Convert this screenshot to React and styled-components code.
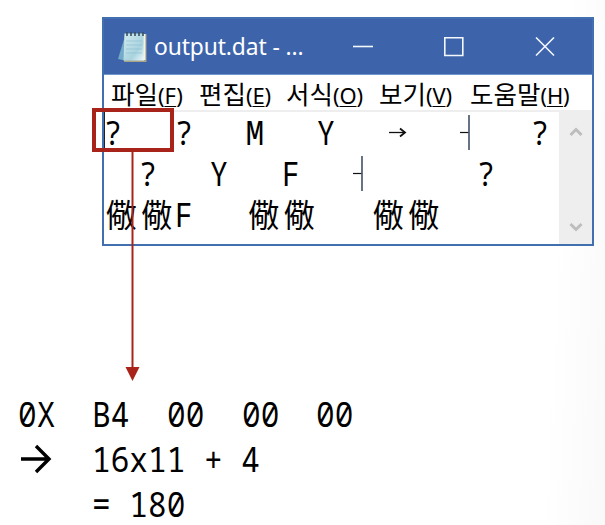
import React from 'react';
import styled, { createGlobalStyle } from 'styled-components';

const GlobalStyle = createGlobalStyle`
  * { box-sizing: border-box; }
  body { margin: 0; background: #fff; overflow: hidden; }
`;

const MONO = '"Noto Sans Mono", "DejaVu Sans Mono", monospace';
const SANS = '"Noto Sans", "Noto Sans CJK KR", sans-serif';

const Page = styled.main`
  position: relative;
  width: 605px;
  height: 525px;
  padding: 17px 0 0 102px;
  background: linear-gradient(93deg, #fff 90%, #f9f9f9 100%);
  color: #000;
`;

const NotepadWindow = styled.section`
  display: flex;
  flex-direction: column;
  width: 492px;
  height: 229px;
  border: 2px solid #416fb0;
  background: #fff;
`;

const TitleBar = styled.header`
  display: flex;
  align-items: center;
  height: 56px;
  flex: none;
  padding-left: 13px;
  background: #3d64aa;
  border-bottom: 1px solid #6f97cb;
`;

const NotepadGlyph = styled.svg`
  width: 32px;
  height: 34px;
  flex: none;
`;

const Title = styled.h1`
  width: 183px;
  margin: 0 0 0 5px;
  font: 400 22.8px/34px ${SANS};
  letter-spacing: -0.1px;
  white-space: pre;
  color: #fff;
`;

const WindowControls = styled.div`
  display: flex;
  gap: 71px;
  margin-left: 16px;
`;

const ControlIcon = styled.svg`
  width: 20px;
  height: 20px;
  fill: none;
  stroke: #f4f7fc;
  stroke-width: 1.6;
`;

const MenuBar = styled.nav`
  display: flex;
  height: 35px;
  flex: none;
  padding-left: 7px;
`;

const MenuItem = styled.span`
  display: flex;
  align-items: baseline;
  width: ${(p) => p.$width}px;
  font: 400 25.5px/35px "Noto Sans CJK KR", sans-serif;
  white-space: nowrap;
`;

const Shortcut = styled.span`
  font: 400 22px/30px ${SANS};
  letter-spacing: -0.1px;
  u { text-decoration-thickness: 1px; text-underline-offset: 2px; }
`;

const Editor = styled.div`
  display: flex;
  flex: 1;
  border-top: 2px solid #eee;
`;

const TextArea = styled.div`
  flex: 1;
  border-left: 1px solid #222;
  border-image: linear-gradient(#222 40px, transparent 40px) 1;
`;

const TextLine = styled.div`
  display: grid;
  grid-template-columns: repeat(25, 17.8px);
  height: 41px;
`;

const Character = styled.span`
  grid-column: ${(p) => p.$cell + 1} / span 1;
  grid-row: 1;
  width: 0;
  margin-left: -1.4px;
  font: 400 32px/41px ${MONO};
  transform: scaleX(0.927);
  transform-origin: left;
  white-space: pre;
`;

const WideCharacters = styled.span`
  grid-column: ${(p) => p.$cell + 1} / span 1;
  grid-row: 1;
  width: 0;
  padding-left: 0.5px;
  font: 400 31.5px/38px "Noto Sans CJK KR", sans-serif;
  letter-spacing: 4.1px;
  white-space: nowrap;
`;

const SymbolIcon = styled.svg`
  grid-column: ${(p) => p.$cell + 1} / span 2;
  grid-row: 1;
  width: 36px;
  height: 41px;
  fill: none;
  stroke: #111;
  overflow: visible;
`;

const ScrollBar = styled.div`
  display: flex;
  flex-direction: column;
  justify-content: space-between;
  align-items: center;
  width: 33px;
  padding: 15px 0 12px;
  background: #eee;
`;

const Chevron = styled.svg`
  width: 14px;
  height: 10px;
  fill: none;
  stroke: #bdbdbd;
  stroke-width: 3;
`;

const Notes = styled.div`
  display: flex;
  flex-direction: column;
  margin: 146px 0 0 -84.5px;
`;

const NoteLine = styled.div`
  display: grid;
  grid-template-columns: repeat(5, 74.7px);
  height: ${(p) => (p.$last ? 43 : 45)}px;
`;

const NoteText = styled.span`
  grid-column-start: ${(p) => p.$column || 'auto'};
  width: 0;
  height: 43px;
  font: 400 35px/43px ${MONO};
  transform: scaleX(0.889);
  transform-origin: left;
  white-space: pre;
`;

const NoteArrow = styled.svg`
  width: 40px;
  height: 45px;
  fill: none;
  stroke: #000;
  stroke-width: 3.4;
`;

const Highlight = styled.div`
  position: absolute;
  left: 92px;
  top: 108px;
  width: 82px;
  height: 44px;
  border: 4px solid #a8241a;
`;

const Pointer = styled.svg`
  position: absolute;
  left: 125px;
  top: 151px;
  width: 15px;
  height: 231px;
`;

const MENUS = [
  ['파일', 'F', 88],
  ['편집', 'E', 87],
  ['서식', 'O', 93],
  ['보기', 'V', 91],
  ['도움말', 'H', 101],
];

function NotepadIcon() {
  return (
    <NotepadGlyph viewBox="0 0 32 34">
      <defs>
        <linearGradient id="paper" x1="0" y1="0" x2="1" y2="1">
          <stop offset="0" stopColor="#d4ebf0" />
          <stop offset="0.65" stopColor="#a8d3df" />
          <stop offset="1" stopColor="#edf9fb" />
        </linearGradient>
      </defs>
      <path d="M8 6L1 29L10 31V6Z" fill="#72aac8" />
      <path d="M8 4H29.5V32H7Z" fill="#a7a48b" />
      <path d="M7.5 3.5H27V30.5H6.5Z" fill="url(#paper)" />
      <path d="M27.5 4V30" stroke="#f2f4ec" strokeWidth="1.8" />
      <path d="M9 11H25M9 15H25M9 19H25M9 23H25" stroke="#8fbfd0" strokeWidth="0.7" />
      <path d="M10 2V6M14 2V6M18 2V6M22 2V6M26 2V6" stroke="#39505f" strokeWidth="1.6" />
    </NotepadGlyph>
  );
}

function TeeSymbol({ cell }) {
  return (
    <SymbolIcon $cell={cell} viewBox="0 0 36 41">
      <path d="M-1 20.5H8" strokeWidth="1.2" />
      <path d="M8 3V38" stroke="#4c5b70" strokeWidth="1.7" />
    </SymbolIcon>
  );
}

export default function App() {
  return (
    <Page>
      <GlobalStyle />
      <NotepadWindow>
        <TitleBar>
          <NotepadIcon />
          <Title>output.dat - ...</Title>
          <WindowControls>
            <ControlIcon viewBox="0 0 20 20"><path d="M0 9.5H20" /></ControlIcon>
            <ControlIcon viewBox="0 0 20 20"><path d="M0.8 0.8H18.8V18.5H0.8Z" /></ControlIcon>
            <ControlIcon viewBox="0 0 20 20"><path d="M1 0.5L19 18.5M19 0.5L1 18.5" /></ControlIcon>
          </WindowControls>
        </TitleBar>
        <MenuBar>
          {MENUS.map(([label, key, width]) => (
            <MenuItem key={key} $width={width}>
              {label}
              <Shortcut>(<u>{key}</u>)</Shortcut>
            </MenuItem>
          ))}
        </MenuBar>
        <Editor>
          <TextArea>
            <TextLine>
              <Character $cell={0}>?</Character>
              <Character $cell={4}>?</Character>
              <Character $cell={8}>M</Character>
              <Character $cell={12}>Y</Character>
              <SymbolIcon $cell={16} viewBox="0 0 36 41">
                <path d="M-1 20.5H15" strokeWidth="1.3" />
                <path d="M10 16.5L15 20.5L10 24.5" strokeWidth="1.8" />
              </SymbolIcon>
              <TeeSymbol cell={20} />
              <Character $cell={24}>?</Character>
            </TextLine>
            <TextLine>
              <Character $cell={2}>?</Character>
              <Character $cell={6}>Y</Character>
              <Character $cell={10}>F</Character>
              <TeeSymbol cell={14} />
              <Character $cell={21}>?</Character>
            </TextLine>
            <TextLine>
              <WideCharacters $cell={0}>儆儆</WideCharacters>
              <Character $cell={4}>F</Character>
              <WideCharacters $cell={8}>儆儆</WideCharacters>
              <WideCharacters $cell={15}>儆儆</WideCharacters>
            </TextLine>
          </TextArea>
          <ScrollBar>
            <Chevron viewBox="0 0 14 10"><path d="M1.5 8L7 2.5L12.5 8" /></Chevron>
            <Chevron viewBox="0 0 14 10"><path d="M1.5 2L7 7.5L12.5 2" /></Chevron>
          </ScrollBar>
        </Editor>
      </NotepadWindow>
      <Notes>
        <NoteLine>
          <NoteText>0X</NoteText>
          <NoteText>B4</NoteText>
          <NoteText>00</NoteText>
          <NoteText>00</NoteText>
          <NoteText>00</NoteText>
        </NoteLine>
        <NoteLine>
          <NoteArrow viewBox="0 0 40 45">
            <path d="M3 22H31M18 9L31 22L18 35" />
          </NoteArrow>
          <NoteText>16x11 + 4</NoteText>
        </NoteLine>
        <NoteLine $last>
          <NoteText $column={2}>= 180</NoteText>
        </NoteLine>
      </Notes>
      <Highlight />
      <Pointer viewBox="0 0 15 231">
        <path d="M7.5 0V218" stroke="#a8241a" strokeWidth="2" />
        <path d="M0.5 216H14.5L7.5 230Z" fill="#a8241a" />
      </Pointer>
    </Page>
  );
}
